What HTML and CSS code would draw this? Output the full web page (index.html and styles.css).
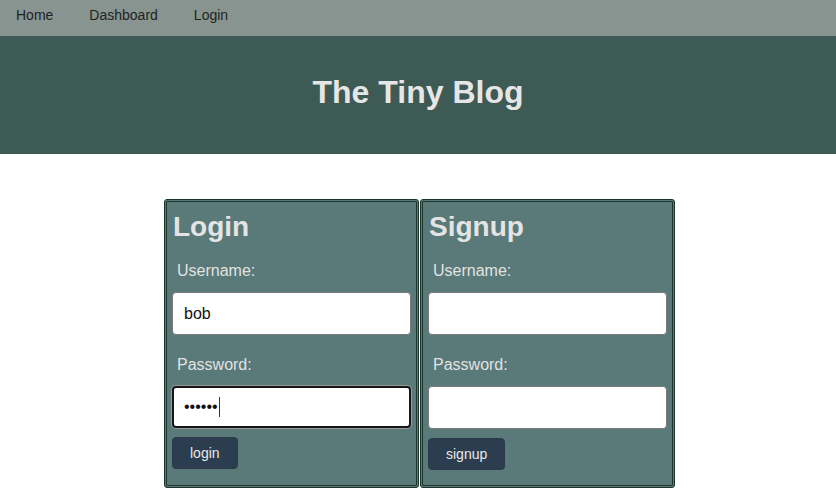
FILE: index.html
```html
<!DOCTYPE html>
<html>
<head>
<meta charset="utf-8">
<link rel="stylesheet" href="styles.css">
</head>
<body>
<nav class="topnav">
  <a href="#">Home</a>
  <a href="#">Dashboard</a>
  <a href="#">Login</a>
</nav>
<header class="banner">
  <h1>The Tiny Blog</h1>
</header>
<main class="forms">
  <form class="card">
    <h2>Login</h2>
    <label class="lbl">Username:</label>
    <div class="field"><input class="inp" type="text" value="bob"></div>
    <label class="lbl">Password:</label>
    <div class="field"><input class="inp focused" type="password" value="secret"><span class="caret"></span></div>
    <button class="btn" type="button">login</button>
  </form>
  <form class="card">
    <h2>Signup</h2>
    <label class="lbl">Username:</label>
    <div class="field"><input class="inp" type="text"></div>
    <label class="lbl">Password:</label>
    <div class="field"><input class="inp" type="password"></div>
    <button class="btn" type="button">signup</button>
  </form>
</main>
</body>
</html>
```
FILE: styles.css
```css
* { box-sizing: border-box; }
html, body { margin: 0; padding: 0; background: #ffffff; }
body { font-family: "Liberation Sans", Arial, sans-serif; }

.topnav {
  height: 36px;
  background: #88948f;
  display: flex;
  align-items: flex-start;
  padding-left: 16px;
  padding-top: 7px;
  gap: 36px;
}
.topnav a {
  color: #1f2324;
  text-decoration: none;
  font-size: 14px;
  line-height: 16px;
}

.banner {
  height: 118px;
  background: #3e5a54;
  display: flex;
  align-items: center;
  justify-content: center;
}
.banner h1 {
  margin: 0;
  color: #e6e6e6;
  font-size: 32px;
  font-weight: bold;
  padding-bottom: 6px;
}

.forms {
  display: flex;
  justify-content: center;
  gap: 1px;
  padding-top: 45px;
  padding-left: 3px;
}
.card {
  width: 255px;
  margin: 0;
  background: #597a78;
  border: 3px double #1c352c;
  border-radius: 3px;
  padding: 9px 5px 15px 5px;
  display: flex;
  flex-direction: column;
}
.card h2 {
  margin: 0 0 0 1px;
  font-size: 28px;
  line-height: 32px;
  color: #e4e4e4;
  font-weight: bold;
}
.lbl {
  color: #e2e2e2;
  font-size: 16px;
  line-height: 18px;
  padding-left: 5px;
  margin-top: 19px;
}
.card h2 + .lbl { margin-top: 19px; }
.field + .lbl { margin-top: 21px; }
.field {
  position: relative;
  margin-top: 12px;
}
.inp {
  display: block;
  width: 100%;
  height: 43px;
  border: 1px solid #7a7a7a;
  border-radius: 4px;
  background: #ffffff;
  font-family: "Liberation Sans", Arial, sans-serif;
  font-size: 16px;
  color: #111;
  padding: 0 11px;
  margin: 0;
  outline: none;
}
.inp.focused {
  border: 2px solid #151515;
  box-shadow: 0 0 0 1px #9a9a9a;
  padding: 0 10px;
  height: 42px;
}
.caret {
  position: absolute;
  left: 47px;
  top: 11px;
  width: 1px;
  height: 20px;
  background: #333;
}
.btn {
  align-self: flex-start;
  margin-top: 9px;
  height: 32px;
  padding: 0 17px;
  background: #2c3d50;
  color: #e8e8e8;
  border: 1px solid #2a3a4b;
  border-radius: 4px;
  font-family: "Liberation Sans", Arial, sans-serif;
  font-size: 14px;
}
```
